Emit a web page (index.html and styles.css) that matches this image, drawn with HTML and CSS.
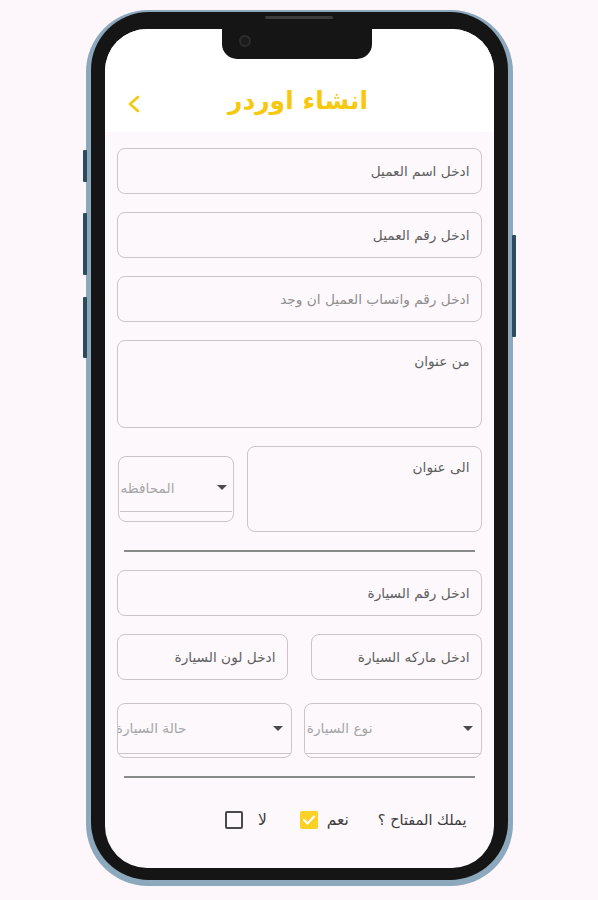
FILE: index.html
```html
<!DOCTYPE html>
<html lang="ar">
<head>
<meta charset="utf-8">
<title>انشاء اوردر</title>
<link rel="stylesheet" href="styles.css">
</head>
<body>
<div class="phone">
  <span class="btn btn-l1"></span>
  <span class="btn btn-l2"></span>
  <span class="btn btn-l3"></span>
  <span class="btn btn-r1"></span>
  <span class="speaker"></span>
  <div class="bezel">
    <div class="screen">
      <div class="notch"><span class="camera"></span></div>
      <header class="appbar">
        <div class="back">
          <svg width="14" height="18" viewBox="0 0 14 18"><polyline points="11,2 3,9 11,16" fill="none" stroke="#f6c90e" stroke-width="2.6" stroke-linecap="round" stroke-linejoin="round"/></svg>
        </div>
        <h1 class="title">انشاء اوردر</h1>
        <div></div>
      </header>
      <main class="form">
        <div class="field">ادخل اسم العميل</div>
        <div class="field">ادخل رقم العميل</div>
        <div class="field light">ادخل رقم واتساب العميل ان وجد</div>
        <div class="field area">من عنوان</div>
        <div class="row row-addr">
          <div class="field area area-to">الى عنوان</div>
          <div class="dd dd-gov">
            <div class="dd-main">
              <span class="arrow"></span>
              <span class="dd-text">المحافظه</span>
            </div>
            <div class="dd-line"></div>
          </div>
        </div>
        <div class="divider"></div>
        <div class="field">ادخل رقم السيارة</div>
        <div class="row row-car">
          <div class="field half">ادخل ماركه السيارة</div>
          <div class="field half">ادخل لون السيارة</div>
        </div>
        <div class="row row-dd">
          <div class="dd dd-type">
            <div class="dd-main">
              <span class="arrow"></span>
              <span class="dd-text">نوع السيارة</span>
            </div>
            <div class="dd-line"></div>
          </div>
          <div class="dd dd-state">
            <div class="dd-main">
              <span class="arrow"></span>
              <span class="dd-text">حالة السيارة</span>
            </div>
            <div class="dd-line"></div>
          </div>
        </div>
        <div class="divider"></div>
        <div class="keys">
          <span class="key-label">يملك المفتاح ؟</span>
          <span class="opt">نعم</span>
          <span class="box checked">
            <svg width="14" height="12" viewBox="0 0 14 12"><polyline points="2,6 5.5,9.5 12,2.5" fill="none" stroke="#fff" stroke-width="2.2" stroke-linecap="round" stroke-linejoin="round"/></svg>
          </span>
          <span class="opt opt-no">لا</span>
          <span class="box"></span>
        </div>
      </main>
    </div>
  </div>
</div>
</body>
</html>
```
FILE: styles.css
```css
html, body {
  margin: 0;
  padding: 0;
  background: #fdf7fc;
}
body {
  font-family: "DejaVu Sans", "Noto Sans", sans-serif;
}
.phone {
  position: relative;
  width: 427px;
  height: 876px;
  margin: 10px auto 0;
  box-sizing: border-box;
  padding: 2px 5px 6px 5px;
  background: #8ba8bc;
  border-radius: 62px;
}
.btn {
  position: absolute;
  width: 4px;
  background: #2e4b5e;
  border-radius: 1px;
}
.btn-l1 { left: -3px; top: 140px; height: 32px; }
.btn-l2 { left: -3px; top: 203px; height: 62px; }
.btn-l3 { left: -3px; top: 287px; height: 61px; }
.btn-r1 { right: -3px; top: 225px; height: 102px; }
.speaker {
  position: absolute;
  left: 179px;
  top: 6px;
  width: 68px;
  height: 3px;
  border-radius: 2px;
  background: #3b3b3b;
  z-index: 2;
}
.bezel {
  height: 100%;
  box-sizing: border-box;
  padding: 17px 14px 12px 14px;
  background: #151515;
  border-radius: 58px;
}
.screen {
  position: relative;
  height: 100%;
  background: #fcf8fc;
  border-radius: 42px;
  overflow: hidden;
}
.notch {
  position: absolute;
  left: 117px;
  top: 0;
  width: 150px;
  height: 30px;
  background: #151515;
  border-radius: 0 0 15px 15px;
}
.camera {
  position: absolute;
  left: 17px;
  top: 6px;
  width: 8px;
  height: 8px;
  border: 2px solid #2d2d2d;
  border-radius: 50%;
  background: #1b1b1b;
}
.appbar {
  height: 103px;
  box-sizing: border-box;
  padding-top: 40px;
  background: #ffffff;
  display: grid;
  grid-template-columns: 1fr auto 1fr;
  align-items: center;
}
.back {
  padding-left: 22px;
  padding-top: 6px;
  display: flex;
  align-items: center;
}
.back svg { display: block; }
.title {
  margin: 0;
  font-size: 25px;
  font-weight: bold;
  color: #f6c90e;
  direction: rtl;
  line-height: 30px;
  padding-right: 2px;
}
.form {
  direction: rtl;
  padding: 16px 12px 0 12px;
  display: flex;
  flex-direction: column;
  gap: 18px;
}
.field {
  height: 46px;
  box-sizing: border-box;
  border: 1.5px solid #cbc5cb;
  border-radius: 8px;
  padding: 0 11px;
  display: flex;
  align-items: center;
  font-size: 13.7px;
  color: #606060;
  white-space: nowrap;
  overflow: hidden;
}
.field.light { color: #8f8f8f; }
.field.area {
  height: 88px;
  align-items: flex-start;
  padding-top: 12px;
}
.row {
  display: flex;
  align-items: center;
}
.row-addr {
  height: 86px;
  gap: 13px;
}
.field.area-to {
  width: 235px;
  height: 86px;
  flex: none;
}
.row-car { gap: 23px; }
.field.half { flex: 1; }
.row-dd {
  gap: 12px;
  margin-top: 5px;
}
.dd {
  box-sizing: border-box;
  border: 1.5px solid #cbc5cb;
  border-radius: 8px;
  display: flex;
  flex-direction: column;
  overflow: hidden;
}
.dd-main {
  flex: 1;
  display: flex;
  align-items: center;
  min-width: 0;
}
.dd-text {
  flex: 1;
  min-width: 0;
  overflow: hidden;
  white-space: nowrap;
  font-size: 13.7px;
  color: #a6a6a6;
}
.arrow {
  flex: none;
  width: 0;
  height: 0;
  border-left: 5px solid transparent;
  border-right: 5px solid transparent;
  border-top: 5px solid #4a4a4a;
}
.dd-line {
  height: 1.5px;
  background: #cbc5cb;
  margin: 0 1px;
}
.dd-gov {
  width: 116px;
  height: 66px;
  flex: none;
  padding-bottom: 9px;
}
.dd-gov .dd-main { padding-top: 8px; }
.dd-gov .arrow { margin-right: 6px; margin-left: 42px; }
.dd-type {
  flex: 1;
  height: 55px;
  padding-bottom: 3px;
}
.dd-type .arrow { margin-right: 8px; margin-left: 90px; }
.dd-state {
  width: 175px;
  flex: none;
  height: 55px;
  padding-bottom: 3px;
}
.dd-state .arrow { margin-right: 8px; margin-left: 86px; }
.divider {
  height: 2px;
  background: #8a8a8a;
  margin: 0 7px;
}
.keys {
  height: 48px;
  display: flex;
  align-items: center;
  padding-right: 15px;
  font-size: 14.5px;
  color: #3c3c3c;
}
.key-label { margin-left: 29px; }
.opt { margin-left: 9px; font-size: 15.5px; }
.opt-no { margin-left: 15px; margin-right: 0; }
.box {
  width: 18px;
  height: 18px;
  box-sizing: border-box;
  border: 2px solid #4a4a4a;
  border-radius: 2px;
  display: flex;
  align-items: center;
  justify-content: center;
}
.box.checked {
  background: #fbd125;
  border-color: #fbd125;
  margin-left: 33px;
}
.box svg { display: block; }
```
